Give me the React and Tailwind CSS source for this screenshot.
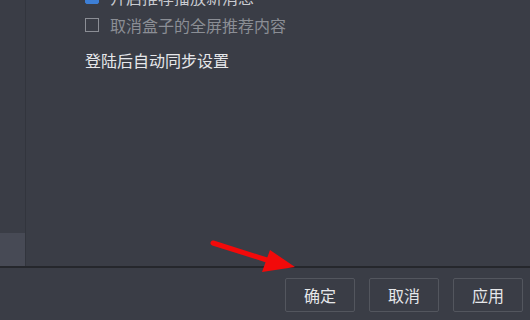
export default function App() {
  return (
    <div
      className="relative w-[530px] h-[320px] overflow-hidden bg-[#3a3d46] flex flex-col"
      style={{ fontFamily: '"Noto Sans CJK SC", "Noto Sans", sans-serif' }}
    >
      {/* body */}
      <div className="flex flex-1 min-h-0">
        <div className="w-[26px] border-r border-[#32353d] flex flex-col">
          <div className="flex-1" />
          <div className="h-[33px] bg-[#474a55]" />
        </div>
        <div className="flex-1 pl-[59px]">
          <div className="flex items-center gap-[11px] -mt-[15px] h-[24px]">
            <span className="w-[14px] h-[14px] rounded-[2px] bg-[#3d7fd6] border border-[#3d7fd6]" />
            <span className="text-[16px] text-[#c9cbd0]">开启推荐播放新消息</span>
          </div>
          <div className="flex items-center gap-[11px] mt-[4px] h-[24px]">
            <span className="w-[14px] h-[14px] border border-[#8b8e95]" />
            <span className="text-[16px] leading-[24px] text-[#8b8e95]">取消盒子的全屏推荐内容</span>
          </div>
          <div className="mt-[11px] h-[24px] flex items-center text-[16px] text-[#e6e7ea]">
            登陆后自动同步设置
          </div>
        </div>
      </div>
      {/* footer */}
      <div className="h-[54px] border-t-2 border-[#25272c] flex items-center justify-end gap-[14px] pr-[7px] pt-[1px]">
        <button className="w-[70px] h-[34px] border border-[#53565e] rounded-[2px] text-[16px] text-[#e6e7ea]">确定</button>
        <button className="w-[70px] h-[34px] border border-[#53565e] rounded-[2px] text-[16px] text-[#e6e7ea]">取消</button>
        <button className="w-[70px] h-[34px] border border-[#53565e] rounded-[2px] text-[16px] text-[#e6e7ea]">应用</button>
      </div>
      {/* red arrow annotation */}
      <svg className="absolute left-0 top-0 pointer-events-none" width="530" height="320">
        <line x1="213" y1="243" x2="270" y2="261" stroke="#f20a0a" strokeWidth="5" strokeLinecap="round" />
        <polygon points="270,250 262,272 295,267" fill="#f20a0a" />
      </svg>
    </div>
  );
}
